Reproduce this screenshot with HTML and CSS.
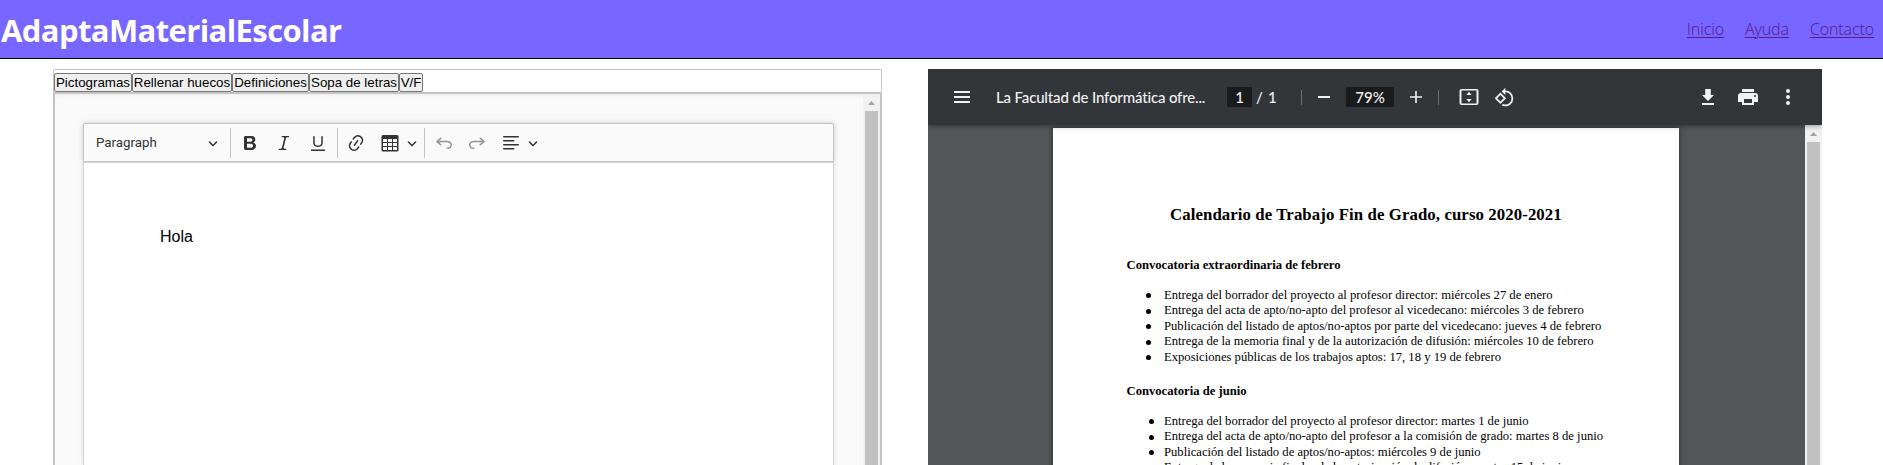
FILE: index.html
```html
<!DOCTYPE html>
<html lang="es">
<head>
<meta charset="utf-8">
<title>AdaptaMaterialEscolar</title>
<link rel="stylesheet" href="styles.css">
</head>
<body>
<header class="site-header">
  <h1 class="brand">AdaptaMaterialEscolar</h1>
  <nav class="site-nav"><a href="#">Inicio</a><a href="#">Ayuda</a><a href="#">Contacto</a></nav>
</header>
<main class="workspace">
  <section class="editor-column">
    <div class="tools">
      <button class="t1">Pictogramas</button><button class="t2">Rellenar huecos</button><button class="t3">Definiciones</button><button class="t4">Sopa de letras</button><button class="t5">V/F</button>
    </div>
    <div class="document-editor">
      <div class="editor-scroll">
        <div class="editor-toolbar">
          <span class="heading-select">Paragraph</span>
          <svg class="chev" viewBox="0 0 10 10"><path d="M.941 4.523a.75.75 0 1 1 1.06-1.06l3.006 3.005 3.005-3.005a.75.75 0 1 1 1.06 1.06l-3.549 3.55a.75.75 0 0 1-1.168-.136L.941 4.523z"/></svg>
          <i class="sep first"></i>
          <svg class="tool bold" viewBox="0 0 20 20"><path d="M10.187 17H5.773c-.637 0-1.092-.138-1.364-.415-.273-.277-.409-.718-.409-1.323V4.738c0-.617.14-1.062.419-1.332.279-.27.73-.406 1.354-.406h4.68c.69 0 1.288.041 1.793.124.506.083.96.242 1.36.477.341.197.644.447.906.75a3.262 3.262 0 0 1 .808 2.162c0 1.401-.722 2.426-2.167 3.075C15.05 10.175 16 11.315 16 13.01a3.756 3.756 0 0 1-2.296 3.504 6.1 6.1 0 0 1-1.517.377c-.571.073-1.238.11-2 .11zm-.217-6.217H7v4.087h3.069c1.977 0 2.965-.69 2.965-2.072 0-.707-.256-1.22-.768-1.537-.512-.319-1.277-.478-2.296-.478zM7 5.13v3.619h2.606c.729 0 1.292-.067 1.69-.2a1.6 1.6 0 0 0 .91-.765c.165-.267.247-.566.247-.897 0-.707-.26-1.176-.778-1.409-.519-.232-1.31-.348-2.375-.348H7z"/></svg>
          <svg class="tool italic" viewBox="0 0 20 20"><path d="m9.586 14.633.021.004c-.036.335.095.655.393.962.082.083.173.15.274.201h1.474a.6.6 0 1 1 0 1.2H5.304a.6.6 0 0 1 0-1.2h1.15c.474-.07.809-.182 1.005-.334.157-.122.291-.32.404-.597l2.416-9.55a1.053 1.053 0 0 0-.281-.823 1.12 1.12 0 0 0-.442-.296H8.15a.6.6 0 0 1 0-1.2h6.443a.6.6 0 1 1 0 1.2h-1.195c-.376.056-.65.155-.823.296-.215.175-.423.439-.623.79l-2.366 9.347z"/></svg>
          <svg class="tool under" viewBox="0 0 20 20"><path d="M3 18v-1.5h14V18zM5.2 10V3.6c0-.4.4-.6.8-.6.3 0 .7.2.7.6v6.2c0 2 1.3 2.8 3.2 2.8 1.9 0 3.4-.9 3.4-2.9V3.6c0-.3.4-.5.8-.5.3 0 .7.2.7.5V10c0 2.7-2.2 4-4.9 4-2.6 0-4.7-1.2-4.7-4z"/></svg>
          <i class="sep"></i>
          <svg class="tool link" viewBox="0 0 20 20"><path d="m11.077 15 .991-1.416a.75.75 0 1 1 1.229.86l-1.148 1.64a.748.748 0 0 1-.217.206 5.251 5.251 0 0 1-8.503-5.955.741.741 0 0 1 .12-.274l1.147-1.639a.75.75 0 1 1 1.228.86L4.933 10.7l.006.003a3.75 3.75 0 0 0 6.132 4.294l.006.004zm5.494-5.335a.748.748 0 0 1-.12.274l-1.147 1.639a.75.75 0 1 1-1.228-.86l.86-1.23a3.75 3.75 0 0 0-6.144-4.301l-.86 1.229a.75.75 0 0 1-1.229-.86l1.148-1.64a.748.748 0 0 1 .217-.206 5.251 5.251 0 0 1 8.503 5.955zm-4.563-2.532a.75.75 0 0 1 .184 1.045l-3.155 4.505a.75.75 0 1 1-1.229-.86l3.155-4.506a.75.75 0 0 1 1.045-.184z"/></svg>
          <svg class="tool table" viewBox="0 0 20 20"><path d="M3 6v3h4V6H3zm0 4v3h4v-3H3zm0 4v3h4v-3H3zm5 3h4v-3H8v3zm5 0h4v-3h-4v3zm4-4v-3h-4v3h4zm0-4V6h-4v3h4zm1.5 8a1.5 1.5 0 0 1-1.5 1.5H3A1.5 1.5 0 0 1 1.5 17V3.500A1.5 1.5 0 0 1 3 2h14a1.5 1.5 0 0 1 1.5 1.5V17zM12 13v-3H8v3h4zm0-4V6H8v3h4z"/></svg>
          <svg class="chev tight" viewBox="0 0 10 10"><path d="M.941 4.523a.75.75 0 1 1 1.06-1.06l3.006 3.005 3.005-3.005a.75.75 0 1 1 1.06 1.06l-3.549 3.55a.75.75 0 0 1-1.168-.136L.941 4.523z"/></svg>
          <i class="sep after-menu"></i>
          <svg class="tool off undo" viewBox="0 0 20 20"><path d="m5.042 9.367 2.189 1.837a.75.75 0 0 1-.965 1.149l-3.788-3.18a.747.747 0 0 1-.21-.284.75.75 0 0 1 .17-.945L6.23 4.762a.75.75 0 1 1 .964 1.15L4.863 7.866h8.917A.75.75 0 0 1 14 7.9a4 4 0 1 1-1.477 7.718l.344-1.489a2.5 2.5 0 1 0 1.094-4.73l.008-.032H5.042z"/></svg>
          <svg class="tool off redo" viewBox="0 0 20 20"><path d="m14.958 9.367-2.189 1.837a.75.75 0 0 0 .965 1.149l3.788-3.18a.747.747 0 0 0 .21-.284.75.75 0 0 0-.17-.945L13.77 4.762a.75.75 0 1 0-.964 1.15l2.331 1.954H6.22A.75.75 0 0 0 6 7.9a4 4 0 1 0 1.477 7.718l-.344-1.489A2.5 2.5 0 1 1 6.039 9.4l-.008-.032h8.927z"/></svg>
          <svg class="tool align" viewBox="0 0 20 20"><path d="M2 3.75c0 .414.336.75.75.75h14.5a.75.75 0 1 0 0-1.5H2.75a.75.75 0 0 0-.75.75zm0 8c0 .414.336.75.75.75h14.5a.75.75 0 1 0 0-1.5H2.75a.75.75 0 0 0-.75.75zm0 4c0 .414.336.75.75.75h9.929a.75.75 0 1 0 0-1.5H2.75a.75.75 0 0 0-.75.75zm0-8c0 .414.336.75.75.75h9.929a.75.75 0 1 0 0-1.5H2.75a.75.75 0 0 0-.75.75z"/></svg>
          <svg class="chev tight" viewBox="0 0 10 10"><path d="M.941 4.523a.75.75 0 1 1 1.06-1.06l3.006 3.005 3.005-3.005a.75.75 0 1 1 1.06 1.06l-3.549 3.55a.75.75 0 0 1-1.168-.136L.941 4.523z"/></svg>
        </div>
        <div class="editable"><p>Hola</p></div>
      </div>
      <div class="scrollbar"><svg viewBox="0 0 17 17"><path d="M5 11h7L8.5 7z"/></svg><div class="thumb"></div></div>
    </div>
  </section>
  <section class="pdf">
    <div class="pdf-bar">
      <svg viewBox="0 0 24 24"><path d="M4 18h16v-2H4zM4 13h16v-2H4zM4 6v2h16V6z"/></svg>
      <span class="pdf-title">La Facultad de Informática ofre...</span>
      <span class="page-no">1</span><span class="slash">/</span><span class="page-total">1</span>
      <i class="p-sep s1"></i>
      <svg class="p-minus" viewBox="0 0 24 24"><path d="M6 11h12v2H6z"/></svg>
      <span class="zoom-box">79%</span>
      <svg class="p-plus" viewBox="0 0 24 24"><path d="M18 12.8h-5.200V18h-1.600v-5.200H6v-1.600h5.200V6h1.600v5.200H18z"/></svg>
      <i class="p-sep s2"></i>
      <svg class="p-fit" viewBox="0 0 24 24"><path fill-rule="evenodd" d="M4.5 4h15a2 2 0 0 1 2 2v12a2 2 0 0 1-2 2h-15a2 2 0 0 1-2-2V6a2 2 0 0 1 2-2zm0 1.600v12.800h15V5.600zM12 6.800l2.600 3.200H9.400zM12 17.200l2.600-3.200H9.400z"/></svg>
      <svg class="p-rot" viewBox="0 0 24 24"><path d="M7.34 6.41.86 12.9l6.49 6.48 6.49-6.48zM3.69 12.9l3.66-3.66L11 12.9l-3.66 3.66zM19.36 6.64A8.95 8.95 0 0 0 13 4V.76L8.76 5 13 9.24V6c1.79 0 3.58.68 4.95 2.05a7.007 7.007 0 0 1 0 9.9 6.973 6.973 0 0 1-7.79 1.44l-1.49 1.49A8.991 8.991 0 0 0 13 22c2.3 0 4.61-.88 6.36-2.64a8.98 8.98 0 0 0 0-12.72z"/></svg>
      <span class="grow"></span>
      <svg class="p-act" viewBox="0 0 24 24"><path d="M18 10h-3.200V4H9.200v6H6l6 6zM6 18v2h12v-2z"/></svg>
      <svg class="p-act" viewBox="0 0 24 24"><path fill-rule="evenodd" d="M19 8H5a3 3 0 0 0-3 3v6h4v3h12v-3h4v-6a3 3 0 0 0-3-3zm-3 10H8v-4h8zm3-6a1 1 0 1 1 0-2 1 1 0 0 1 0 2zM18 4H6v3h12z"/></svg>
      <svg class="p-act" viewBox="0 0 24 24"><path d="M12 8a2 2 0 1 0 0-4 2 2 0 0 0 0 4zm0 2a2 2 0 1 0 0 4 2 2 0 0 0 0-4zm0 6a2 2 0 1 0 0 4 2 2 0 0 0 0-4z"/></svg>
    </div>
    <div class="pdf-view">
      <article class="page">
        <h2>Calendario de Trabajo Fin de Grado, curso 2020-2021</h2>
        <h3>Convocatoria extraordinaria de febrero</h3>
        <ul>
          <li>Entrega del borrador del proyecto al profesor director: miércoles 27 de enero</li>
          <li>Entrega del acta de apto/no-apto del profesor al vicedecano: miércoles 3 de febrero</li>
          <li>Publicación del listado de aptos/no-aptos por parte del vicedecano: jueves 4 de febrero</li>
          <li>Entrega de la memoria final y de la autorización de difusión: miércoles 10 de febrero</li>
          <li>Exposiciones públicas de los trabajos aptos: 17, 18 y 19 de febrero</li>
        </ul>
        <h3>Convocatoria de junio</h3>
        <ul class="june">
          <li>Entrega del borrador del proyecto al profesor director: martes 1 de junio</li>
          <li>Entrega del acta de apto/no-apto del profesor a la comisión de grado: martes 8 de junio</li>
          <li>Publicación del listado de aptos/no-aptos: miércoles 9 de junio</li>
          <li>Entrega de la memoria final y de la autorización de difusión: martes 15 de junio</li>
        </ul>
      </article>
      <div class="scrollbar"><svg viewBox="0 0 17 17"><path d="M5 11h7L8.5 7z"/></svg><div class="thumb"></div></div>
    </div>
  </section>
</main>
</body>
</html>
```
FILE: styles.css
```css
* { box-sizing: border-box; }
html, body { height: 100%; }
body { margin: 0; overflow: hidden; background: #fff; display: flex; flex-direction: column; }
svg { flex: none; display: block; }
.site-header { flex: none; height: 59px; background: #7766ff; border-bottom: 1px solid #000; display: flex; justify-content: space-between; align-items: center; padding: 2px 9px 0 1px; }
.brand { margin: 0; font: 700 31px/40px "Open Sans", sans-serif; color: #fff; letter-spacing: -.6px; white-space: nowrap; }
.site-nav { display: flex; gap: 21px; padding-bottom: 2px; font: 300 16px/22px "Open Sans", sans-serif; letter-spacing: -.1px; }
.site-nav a { color: #551a8b; white-space: nowrap; text-underline-offset: 2px; text-decoration-thickness: 1px; }
.workspace { flex: 1; min-height: 0; display: flex; padding: 10px 61px 0 53px; justify-content: space-between; }
.editor-column { width: 829px; display: flex; flex-direction: column; min-height: 0; }
.tools { flex: none; height: 24px; border: 1px solid #c4c4c4; border-bottom: 0; border-radius: 2px 2px 0 0; padding-top: 3px; display: flex; }
.tools button { height: 19px; margin: 0; padding: 0; border: 1px solid #767676; border-radius: 2px; background: #efefef; color: #000; font: 13.33px/15px "Liberation Sans", Arial, sans-serif; white-space: nowrap; }
.t1 { width: 78px; }
.t2 { width: 100px; }
.t3 { width: 77px; }
.t4 { width: 90px; }
.t5 { width: 24px; }
.document-editor { flex: 1; min-height: 0; margin-top: -1px; border: 2px solid #c4c4c4; border-bottom: 0; border-radius: 2px 2px 0 0; background: #fafafa; display: flex; overflow: hidden; box-shadow: inset 0 4px 4px -3px rgba(0,0,0,.06); }
.editor-scroll { flex: 1; padding: 29px 29px 0 28px; display: flex; flex-direction: column; }
.editor-toolbar { flex: none; height: 39px; border: 1px solid #c4c4c4; border-radius: 2px 2px 0 0; box-shadow: 0 0 5px rgba(0,0,0,.2); background: #fafafa; display: flex; align-items: center; padding-left: 12px; fill: #333; }
.heading-select { width: 112px; font: 13.3px/20px Roboto, sans-serif; color: #333; }
.chev { width: 10px; height: 10px; margin-top: 1px; }
.sep { flex: none; width: 1px; height: 30px; background: #c4c4c4; }
.sep.first { margin-left: 12px; }
.tool { width: 20px; height: 20px; }
.bold { margin-left: 9px; }
.italic, .under { margin-left: 14px; }
.under + .sep { margin-left: 9px; }
.link { margin-left: 8px; }
.table { margin-left: 14px; }
.chev.tight { margin-left: 7px; }
.after-menu { margin-left: 7px; }
.undo { margin-left: 9px; }
.redo { margin-left: 13px; }
.align { margin-left: 14px; }
.off { opacity: .5; }
.editable { flex: 1; border: 1px solid #d3d3d3; border-bottom: 0; background: #fff; padding: 64px 76px; box-shadow: 0 0 5px rgba(0,0,0,.1); clip-path: inset(0 -6px 0 -6px); }
.editable p { margin: 0; font: 16px/20px "Liberation Sans", Arial, sans-serif; }
.scrollbar { flex: none; width: 17px; background: #f1f1f1; display: flex; flex-direction: column; align-items: center; }
.scrollbar svg { width: 17px; height: 17px; fill: #a3a3a3; }
.thumb { flex: 1; width: 13px; background: #c1c1c1; }
.pdf { width: 894px; display: flex; flex-direction: column; min-height: 0; overflow: hidden; background: #525659; }
.pdf-bar { flex: none; position: relative; height: 56px; background: #323639; color: #f1f1f1; fill: #f1f1f1; display: flex; align-items: center; padding: 0 22px; box-shadow: 0 1px 5px rgba(0,0,0,.4); font: 500 15px/20px Lato, sans-serif; }
.pdf-bar svg { width: 24px; height: 24px; }
.pdf-title { margin-left: 22px; width: 231px; white-space: nowrap; letter-spacing: -.16px; }
.page-no { width: 25px; height: 20px; background: #191b1c; text-align: center; }
.slash { margin-left: 4px; width: 12px; }
.page-total { width: 12px; }
.p-sep { flex: none; width: 1px; height: 15px; background: #6d7073; }
.s1 { margin-left: 21px; }
.p-minus { margin-left: 10px; }
.zoom-box { width: 48px; height: 20px; background: #191b1c; text-align: center; margin-left: 10px; }
.p-plus { margin-left: 10px; }
.s2 { margin-left: 10px; }
.p-fit { margin-left: 18px; }
.pdf-bar .p-rot { width: 20px; height: 20px; margin-left: 13px; overflow: visible; }
.grow { flex: 1; }
.p-act + .p-act { margin-left: 16px; }
.pdf-view { flex: 1; min-height: 0; display: flex; padding-left: 125px; justify-content: space-between; overflow: hidden; }
.page { width: 626px; margin-top: 3px; height: 700px; background: #fff; box-shadow: 0 0 5px rgba(0,0,0,.5); color: #000; padding: 75px 0 0 73.5px; font: 12.65px/15.5px "Liberation Serif", serif; white-space: nowrap; }
.page h2 { margin: 0 0 0 43.5px; font-size: 16.8px; line-height: 24px; letter-spacing: .09px; }
.page h3 { margin: 30px 0 14.5px; font-size: 12.65px; line-height: 16px; }
.page ul { margin: 0; padding: 0; list-style: none; }
.page ul + h3 { margin-top: 18px; }
.page li { display: flex; align-items: center; }
.page li::before { content: ""; width: 5px; height: 5px; border-radius: 50%; background: #000; margin: 1px 13px 0 19.5px; }
.page .june li::before { margin: 1px 10px 0 22.5px; }
.pdf-bar .p-rot { width: 21px; height: 21px; margin-right: -1px; }
```
